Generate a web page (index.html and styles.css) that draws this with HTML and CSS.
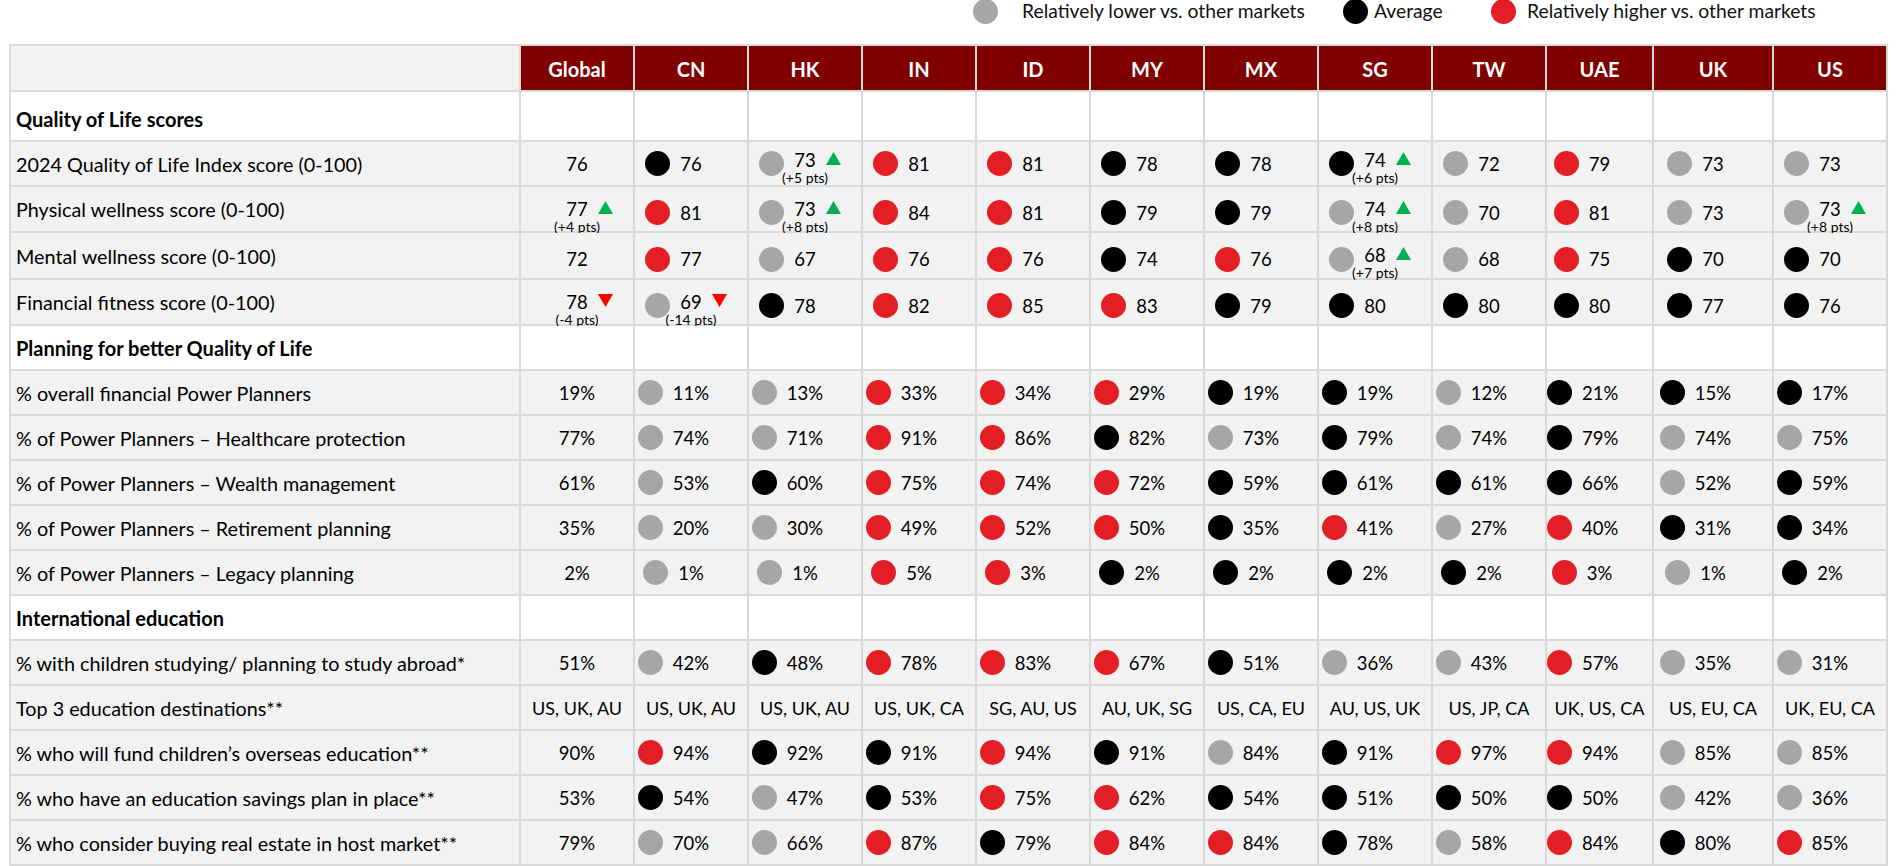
FILE: index.html
```html
<!DOCTYPE html>
<html lang="en">
<head>
<meta charset="utf-8">
<title>Quality of Life Index by market</title>
<link rel="stylesheet" href="styles.css">
</head>
<body>
<div class="legend">
  <div class="li li1"><i class="dot g"></i><span>Relatively lower vs. other markets</span></div>
  <div class="li li2"><i class="dot k"></i><span>Average</span></div>
  <div class="li li3"><i class="dot r"></i><span>Relatively higher vs. other markets</span></div>
</div>

<div class="tbl">
  <div class="row head">
    <div class="h0"></div>
    <div class="h">Global</div><div class="h">CN</div><div class="h">HK</div><div class="h">IN</div><div class="h">ID</div><div class="h">MY</div><div class="h">MX</div><div class="h">SG</div><div class="h">TW</div><div class="h">UAE</div><div class="h">UK</div><div class="h">US</div>
  </div>

  <div class="row sec first">
    <div class="lab">Quality of Life scores</div>
    <div></div><div></div><div></div><div></div><div></div><div></div><div></div><div></div><div></div><div></div><div></div><div></div>
  </div>

  <div class="row data">
    <div class="lab">2024 Quality of Life Index score (0-100)</div>
    <div class="c"><span class="n">76</span></div>
    <div class="c"><i class="dot k"></i><span class="n">76</span></div>
    <div class="c s"><i class="dot g"></i><span class="n">73</span><svg class="tri up" viewBox="0 0 15 13"><path d="M7.5 0L15 13H0Z"/></svg><span class="sub">(+5 pts)</span></div>
    <div class="c"><i class="dot r"></i><span class="n">81</span></div>
    <div class="c"><i class="dot r"></i><span class="n">81</span></div>
    <div class="c"><i class="dot k"></i><span class="n">78</span></div>
    <div class="c"><i class="dot k"></i><span class="n">78</span></div>
    <div class="c s"><i class="dot k"></i><span class="n">74</span><svg class="tri up" viewBox="0 0 15 13"><path d="M7.5 0L15 13H0Z"/></svg><span class="sub">(+6 pts)</span></div>
    <div class="c"><i class="dot g"></i><span class="n">72</span></div>
    <div class="c"><i class="dot r"></i><span class="n">79</span></div>
    <div class="c"><i class="dot g"></i><span class="n">73</span></div>
    <div class="c"><i class="dot g"></i><span class="n">73</span></div>
  </div>

  <div class="row data sh">
    <div class="lab">Physical wellness score (0-100)</div>
    <div class="c s"><span class="n">77</span><svg class="tri up" viewBox="0 0 15 13"><path d="M7.5 0L15 13H0Z"/></svg><span class="sub">(+4 pts)</span></div>
    <div class="c"><i class="dot r"></i><span class="n">81</span></div>
    <div class="c s"><i class="dot g"></i><span class="n">73</span><svg class="tri up" viewBox="0 0 15 13"><path d="M7.5 0L15 13H0Z"/></svg><span class="sub">(+8 pts)</span></div>
    <div class="c"><i class="dot r"></i><span class="n">84</span></div>
    <div class="c"><i class="dot r"></i><span class="n">81</span></div>
    <div class="c"><i class="dot k"></i><span class="n">79</span></div>
    <div class="c"><i class="dot k"></i><span class="n">79</span></div>
    <div class="c s"><i class="dot g"></i><span class="n">74</span><svg class="tri up" viewBox="0 0 15 13"><path d="M7.5 0L15 13H0Z"/></svg><span class="sub">(+8 pts)</span></div>
    <div class="c"><i class="dot g"></i><span class="n">70</span></div>
    <div class="c"><i class="dot r"></i><span class="n">81</span></div>
    <div class="c"><i class="dot g"></i><span class="n">73</span></div>
    <div class="c s"><i class="dot g"></i><span class="n">73</span><svg class="tri up" viewBox="0 0 15 13"><path d="M7.5 0L15 13H0Z"/></svg><span class="sub">(+8 pts)</span></div>
  </div>

  <div class="row data sh">
    <div class="lab">Mental wellness score (0-100)</div>
    <div class="c"><span class="n">72</span></div>
    <div class="c"><i class="dot r"></i><span class="n">77</span></div>
    <div class="c"><i class="dot g"></i><span class="n">67</span></div>
    <div class="c"><i class="dot r"></i><span class="n">76</span></div>
    <div class="c"><i class="dot r"></i><span class="n">76</span></div>
    <div class="c"><i class="dot k"></i><span class="n">74</span></div>
    <div class="c"><i class="dot r"></i><span class="n">76</span></div>
    <div class="c s"><i class="dot g"></i><span class="n">68</span><svg class="tri up" viewBox="0 0 15 13"><path d="M7.5 0L15 13H0Z"/></svg><span class="sub">(+7 pts)</span></div>
    <div class="c"><i class="dot g"></i><span class="n">68</span></div>
    <div class="c"><i class="dot r"></i><span class="n">75</span></div>
    <div class="c"><i class="dot k"></i><span class="n">70</span></div>
    <div class="c"><i class="dot k"></i><span class="n">70</span></div>
  </div>

  <div class="row data sh">
    <div class="lab">Financial fitness score (0-100)</div>
    <div class="c s"><span class="n">78</span><svg class="tri dn" viewBox="0 0 15 13"><path d="M0 0H15L7.5 13Z"/></svg><span class="sub">(-4 pts)</span></div>
    <div class="c s"><i class="dot g"></i><span class="n">69</span><svg class="tri dn" viewBox="0 0 15 13"><path d="M0 0H15L7.5 13Z"/></svg><span class="sub">(-14 pts)</span></div>
    <div class="c"><i class="dot k"></i><span class="n">78</span></div>
    <div class="c"><i class="dot r"></i><span class="n">82</span></div>
    <div class="c"><i class="dot r"></i><span class="n">85</span></div>
    <div class="c"><i class="dot r"></i><span class="n">83</span></div>
    <div class="c"><i class="dot k"></i><span class="n">79</span></div>
    <div class="c"><i class="dot k"></i><span class="n">80</span></div>
    <div class="c"><i class="dot k"></i><span class="n">80</span></div>
    <div class="c"><i class="dot k"></i><span class="n">80</span></div>
    <div class="c"><i class="dot k"></i><span class="n">77</span></div>
    <div class="c"><i class="dot k"></i><span class="n">76</span></div>
  </div>

  <div class="row sec">
    <div class="lab">Planning for better Quality of Life</div>
    <div></div><div></div><div></div><div></div><div></div><div></div><div></div><div></div><div></div><div></div><div></div><div></div>
  </div>

  <div class="row data">
    <div class="lab">% overall financial Power Planners</div>
    <div class="c"><span class="n">19%</span></div>
    <div class="c"><i class="dot g"></i><span class="n">11%</span></div>
    <div class="c"><i class="dot g"></i><span class="n">13%</span></div>
    <div class="c"><i class="dot r"></i><span class="n">33%</span></div>
    <div class="c"><i class="dot r"></i><span class="n">34%</span></div>
    <div class="c"><i class="dot r"></i><span class="n">29%</span></div>
    <div class="c"><i class="dot k"></i><span class="n">19%</span></div>
    <div class="c"><i class="dot k"></i><span class="n">19%</span></div>
    <div class="c"><i class="dot g"></i><span class="n">12%</span></div>
    <div class="c"><i class="dot k"></i><span class="n">21%</span></div>
    <div class="c"><i class="dot k"></i><span class="n">15%</span></div>
    <div class="c"><i class="dot k"></i><span class="n">17%</span></div>
  </div>

  <div class="row data">
    <div class="lab">% of Power Planners – Healthcare protection</div>
    <div class="c"><span class="n">77%</span></div>
    <div class="c"><i class="dot g"></i><span class="n">74%</span></div>
    <div class="c"><i class="dot g"></i><span class="n">71%</span></div>
    <div class="c"><i class="dot r"></i><span class="n">91%</span></div>
    <div class="c"><i class="dot r"></i><span class="n">86%</span></div>
    <div class="c"><i class="dot k"></i><span class="n">82%</span></div>
    <div class="c"><i class="dot g"></i><span class="n">73%</span></div>
    <div class="c"><i class="dot k"></i><span class="n">79%</span></div>
    <div class="c"><i class="dot g"></i><span class="n">74%</span></div>
    <div class="c"><i class="dot k"></i><span class="n">79%</span></div>
    <div class="c"><i class="dot g"></i><span class="n">74%</span></div>
    <div class="c"><i class="dot g"></i><span class="n">75%</span></div>
  </div>

  <div class="row data">
    <div class="lab">% of Power Planners – Wealth management</div>
    <div class="c"><span class="n">61%</span></div>
    <div class="c"><i class="dot g"></i><span class="n">53%</span></div>
    <div class="c"><i class="dot k"></i><span class="n">60%</span></div>
    <div class="c"><i class="dot r"></i><span class="n">75%</span></div>
    <div class="c"><i class="dot r"></i><span class="n">74%</span></div>
    <div class="c"><i class="dot r"></i><span class="n">72%</span></div>
    <div class="c"><i class="dot k"></i><span class="n">59%</span></div>
    <div class="c"><i class="dot k"></i><span class="n">61%</span></div>
    <div class="c"><i class="dot k"></i><span class="n">61%</span></div>
    <div class="c"><i class="dot k"></i><span class="n">66%</span></div>
    <div class="c"><i class="dot g"></i><span class="n">52%</span></div>
    <div class="c"><i class="dot k"></i><span class="n">59%</span></div>
  </div>

  <div class="row data">
    <div class="lab">% of Power Planners – Retirement planning</div>
    <div class="c"><span class="n">35%</span></div>
    <div class="c"><i class="dot g"></i><span class="n">20%</span></div>
    <div class="c"><i class="dot g"></i><span class="n">30%</span></div>
    <div class="c"><i class="dot r"></i><span class="n">49%</span></div>
    <div class="c"><i class="dot r"></i><span class="n">52%</span></div>
    <div class="c"><i class="dot r"></i><span class="n">50%</span></div>
    <div class="c"><i class="dot k"></i><span class="n">35%</span></div>
    <div class="c"><i class="dot r"></i><span class="n">41%</span></div>
    <div class="c"><i class="dot g"></i><span class="n">27%</span></div>
    <div class="c"><i class="dot r"></i><span class="n">40%</span></div>
    <div class="c"><i class="dot k"></i><span class="n">31%</span></div>
    <div class="c"><i class="dot k"></i><span class="n">34%</span></div>
  </div>

  <div class="row data">
    <div class="lab">% of Power Planners – Legacy planning</div>
    <div class="c"><span class="n">2%</span></div>
    <div class="c"><i class="dot g"></i><span class="n">1%</span></div>
    <div class="c"><i class="dot g"></i><span class="n">1%</span></div>
    <div class="c"><i class="dot r"></i><span class="n">5%</span></div>
    <div class="c"><i class="dot r"></i><span class="n">3%</span></div>
    <div class="c"><i class="dot k"></i><span class="n">2%</span></div>
    <div class="c"><i class="dot k"></i><span class="n">2%</span></div>
    <div class="c"><i class="dot k"></i><span class="n">2%</span></div>
    <div class="c"><i class="dot k"></i><span class="n">2%</span></div>
    <div class="c"><i class="dot r"></i><span class="n">3%</span></div>
    <div class="c"><i class="dot g"></i><span class="n">1%</span></div>
    <div class="c"><i class="dot k"></i><span class="n">2%</span></div>
  </div>

  <div class="row sec">
    <div class="lab">International education</div>
    <div></div><div></div><div></div><div></div><div></div><div></div><div></div><div></div><div></div><div></div><div></div><div></div>
  </div>

  <div class="row data">
    <div class="lab">% with children studying/ planning to study abroad*</div>
    <div class="c"><span class="n">51%</span></div>
    <div class="c"><i class="dot g"></i><span class="n">42%</span></div>
    <div class="c"><i class="dot k"></i><span class="n">48%</span></div>
    <div class="c"><i class="dot r"></i><span class="n">78%</span></div>
    <div class="c"><i class="dot r"></i><span class="n">83%</span></div>
    <div class="c"><i class="dot r"></i><span class="n">67%</span></div>
    <div class="c"><i class="dot k"></i><span class="n">51%</span></div>
    <div class="c"><i class="dot g"></i><span class="n">36%</span></div>
    <div class="c"><i class="dot g"></i><span class="n">43%</span></div>
    <div class="c"><i class="dot r"></i><span class="n">57%</span></div>
    <div class="c"><i class="dot g"></i><span class="n">35%</span></div>
    <div class="c"><i class="dot g"></i><span class="n">31%</span></div>
  </div>

  <div class="row data">
    <div class="lab">Top 3 education destinations**</div>
    <div class="c"><span class="n t">US, UK, AU</span></div>
    <div class="c"><span class="n t">US, UK, AU</span></div>
    <div class="c"><span class="n t">US, UK, AU</span></div>
    <div class="c"><span class="n t">US, UK, CA</span></div>
    <div class="c"><span class="n t">SG, AU, US</span></div>
    <div class="c"><span class="n t">AU, UK, SG</span></div>
    <div class="c"><span class="n t">US, CA, EU</span></div>
    <div class="c"><span class="n t">AU, US, UK</span></div>
    <div class="c"><span class="n t">US, JP, CA</span></div>
    <div class="c"><span class="n t">UK, US, CA</span></div>
    <div class="c"><span class="n t">US, EU, CA</span></div>
    <div class="c"><span class="n t">UK, EU, CA</span></div>
  </div>

  <div class="row data">
    <div class="lab">% who will fund children’s overseas education**</div>
    <div class="c"><span class="n">90%</span></div>
    <div class="c"><i class="dot r"></i><span class="n">94%</span></div>
    <div class="c"><i class="dot k"></i><span class="n">92%</span></div>
    <div class="c"><i class="dot k"></i><span class="n">91%</span></div>
    <div class="c"><i class="dot r"></i><span class="n">94%</span></div>
    <div class="c"><i class="dot k"></i><span class="n">91%</span></div>
    <div class="c"><i class="dot g"></i><span class="n">84%</span></div>
    <div class="c"><i class="dot k"></i><span class="n">91%</span></div>
    <div class="c"><i class="dot r"></i><span class="n">97%</span></div>
    <div class="c"><i class="dot r"></i><span class="n">94%</span></div>
    <div class="c"><i class="dot g"></i><span class="n">85%</span></div>
    <div class="c"><i class="dot g"></i><span class="n">85%</span></div>
  </div>

  <div class="row data">
    <div class="lab">% who have an education savings plan in place**</div>
    <div class="c"><span class="n">53%</span></div>
    <div class="c"><i class="dot k"></i><span class="n">54%</span></div>
    <div class="c"><i class="dot g"></i><span class="n">47%</span></div>
    <div class="c"><i class="dot k"></i><span class="n">53%</span></div>
    <div class="c"><i class="dot r"></i><span class="n">75%</span></div>
    <div class="c"><i class="dot r"></i><span class="n">62%</span></div>
    <div class="c"><i class="dot k"></i><span class="n">54%</span></div>
    <div class="c"><i class="dot k"></i><span class="n">51%</span></div>
    <div class="c"><i class="dot k"></i><span class="n">50%</span></div>
    <div class="c"><i class="dot k"></i><span class="n">50%</span></div>
    <div class="c"><i class="dot g"></i><span class="n">42%</span></div>
    <div class="c"><i class="dot g"></i><span class="n">36%</span></div>
  </div>

  <div class="row data">
    <div class="lab">% who consider buying real estate in host market**</div>
    <div class="c"><span class="n">79%</span></div>
    <div class="c"><i class="dot g"></i><span class="n">70%</span></div>
    <div class="c"><i class="dot g"></i><span class="n">66%</span></div>
    <div class="c"><i class="dot r"></i><span class="n">87%</span></div>
    <div class="c"><i class="dot k"></i><span class="n">79%</span></div>
    <div class="c"><i class="dot r"></i><span class="n">84%</span></div>
    <div class="c"><i class="dot r"></i><span class="n">84%</span></div>
    <div class="c"><i class="dot k"></i><span class="n">78%</span></div>
    <div class="c"><i class="dot g"></i><span class="n">58%</span></div>
    <div class="c"><i class="dot r"></i><span class="n">84%</span></div>
    <div class="c"><i class="dot k"></i><span class="n">80%</span></div>
    <div class="c"><i class="dot r"></i><span class="n">85%</span></div>
  </div>
</div>
</body>
</html>
```

FILE: styles.css
```css
* { box-sizing: border-box; }

html, body {
  margin: 0;
  padding: 0;
  background: #ffffff;
}

body {
  font-family: Lato, "Liberation Sans", Arial, sans-serif;
  font-size: 18.5px;
  color: #000000;
  width: 1898px;
  height: 866px;
  overflow: hidden;
}

/* ---------- legend ---------- */
.legend {
  display: flex;
  align-items: flex-start;
  height: 44px;
  padding-left: 973px;
}

.li {
  display: flex;
  align-items: center;
  height: 22px;
  font-size: 19.3px;
  line-height: 22px;
  color: #111111;
}

.li .dot {
  margin: 0;
  flex: 0 0 auto;
}

.li1 { width: 370px; gap: 24px; }
.li2 { width: 148px; gap: 6px; }
.li3 { gap: 11px; }

/* ---------- dots & triangles ---------- */
.dot {
  display: block;
  width: 25px;
  height: 25px;
  border-radius: 50%;
}
.dot.g { background: #a6a6a6; }
.dot.k { background: #000000; }
.dot.r { background: #e31e25; }

.tri {
  display: block;
  width: 15px;
  height: 13px;
}
.tri.up { fill: #00b050; }
.tri.dn { fill: #ff0000; }

/* ---------- table ---------- */
.tbl {
  display: grid;
  width: max-content;
  margin-left: 9px;
  grid-template-columns: 510px repeat(9, 114px) 107px 120px 114px;
  grid-template-rows: 46px 50px 45px 46px 47px 46px repeat(12, 45px);
  border-left: 2px solid #d9d9d9;
  border-top: 2px solid #d9d9d9;
}

.row { display: contents; }

.row > div {
  border-right: 2px solid #d9d9d9;
  border-bottom: 2px solid #d9d9d9;
}

.head .h0 { background: #f2f2f2; }

.head .h {
  background: #800000;
  color: #ffffff;
  font-weight: 700;
  font-size: 20px;
  display: flex;
  align-items: center;
  justify-content: center;
  padding-top: 2px;
}

.sec > div { background: #ffffff; }
.data > div { background: #f2f2f2; }

.lab {
  display: flex;
  align-items: center;
  padding-left: 5px;
  white-space: nowrap;
  font-size: 19.8px;
}

.sec .lab { font-weight: 700; font-size: 20px; }
.sec.first .lab { padding-top: 5px; }

/* value cells */
.c {
  display: grid;
  grid-template-columns: 1fr auto 1fr;
  align-items: center;
  align-content: center;
}

.c .dot {
  grid-column: 1;
  grid-row: 1;
  justify-self: end;
  margin-right: 10px;
}

.c .n {
  grid-column: 2;
  grid-row: 1;
  line-height: 20px;
  white-space: nowrap;
}

.c .n.t { font-size: 18px; }

.c .tri {
  grid-column: 3;
  grid-row: 1;
  justify-self: start;
  margin-left: 10px;
  margin-top: -3px;
}

.c .sub {
  grid-column: 1 / -1;
  grid-row: 2;
  text-align: center;
  font-size: 14px;
  line-height: 14px;
  margin-top: 1px;
  margin-bottom: -7px;
  white-space: nowrap;
}

.c.s .dot { grid-row: 1 / 3; }

.sh > .c { padding-top: 7px; }
```
